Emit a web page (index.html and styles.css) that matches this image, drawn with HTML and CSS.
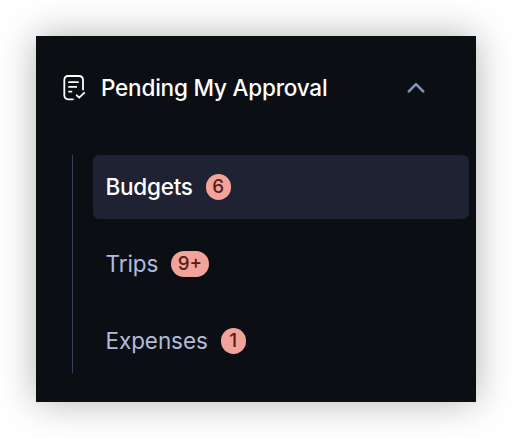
FILE: index.html
```html
<!DOCTYPE html>
<html lang="en">
<head>
<meta charset="utf-8">
<title>Approvals</title>
<link rel="stylesheet" href="styles.css">
</head>
<body>
<nav class="panel">
  <div class="header">
    <svg class="doc" width="24" height="28" viewBox="0 0 24 28" fill="none" stroke="#fff" stroke-width="1.8" stroke-linecap="round" stroke-linejoin="round">
      <path d="M11 25.300H6.200Q2.300 25.300 2.300 21.100V6.200Q2.300 2 6.200 2H16.800Q21 2 21 6.200V15.500"/>
      <path d="M7 8.200H16M7 12.900H14.200M7 17.600H9.500M14.700 21.300L17.200 23.700L22.200 18.800"/>
    </svg>
    <span class="title">Pending My Approval</span>
    <svg class="chevron" width="20" height="14" viewBox="0 0 20 14" fill="none" stroke="#8294bd" stroke-width="2.6" stroke-linecap="round" stroke-linejoin="round">
      <path d="M2.800 10.300L10 3.100L17.200 10.300"/>
    </svg>
  </div>
  <div class="list">
    <div class="item active"><span class="label">Budgets</span><span class="badge">6</span></div>
    <div class="item"><span class="label">Trips</span><span class="badge">9+</span></div>
    <div class="item"><span class="label">Expenses</span><span class="badge">1</span></div>
  </div>
</nav>
</body>
</html>
```
FILE: styles.css
```css
* { box-sizing: border-box; }
body {
  margin: 0;
  padding: 36px;
  background: #fff;
  font-family: Inter, "Liberation Sans", sans-serif;
  font-size: 22.5px;
}
.panel {
  width: 440px;
  height: 366px;
  padding: 31px 7px 0 26px;
  background: #0b0f13;
  box-shadow: 0 0 36px rgba(0, 0, 0, 0.3);
}
.header {
  display: flex;
  align-items: center;
  height: 42px;
  padding-right: 43px;
  color: #fff;
}
.title {
  margin-left: 15px;
  padding-bottom: 2px;
  font-weight: 500;
  letter-spacing: -0.2px;
  white-space: nowrap;
}
.chevron { margin-left: auto; }
.list {
  display: flex;
  flex-direction: column;
  gap: 13px;
  margin: 46px 0 0 10px;
  padding-left: 20px;
  border-left: 1px solid #363e65;
}
.item {
  display: flex;
  align-items: center;
  gap: 13px;
  height: 64px;
  padding-left: 12.5px;
  border-radius: 6px;
  color: #b2bbdc;
}
.label {
  padding-bottom: 2px;
  font-weight: 400;
  letter-spacing: -0.08px;
}
.active {
  background: #1f2233;
  color: #fff;
}
.active .label { font-weight: 500; letter-spacing: -0.25px; }
.badge {
  display: flex;
  align-items: center;
  justify-content: center;
  min-width: 25px;
  height: 26px;
  padding: 0 6.5px 1px;
  border-radius: 13px;
  background: #f2a49b;
  color: #561c16;
  font-size: 18.8px;
  font-weight: 500;
}
```
